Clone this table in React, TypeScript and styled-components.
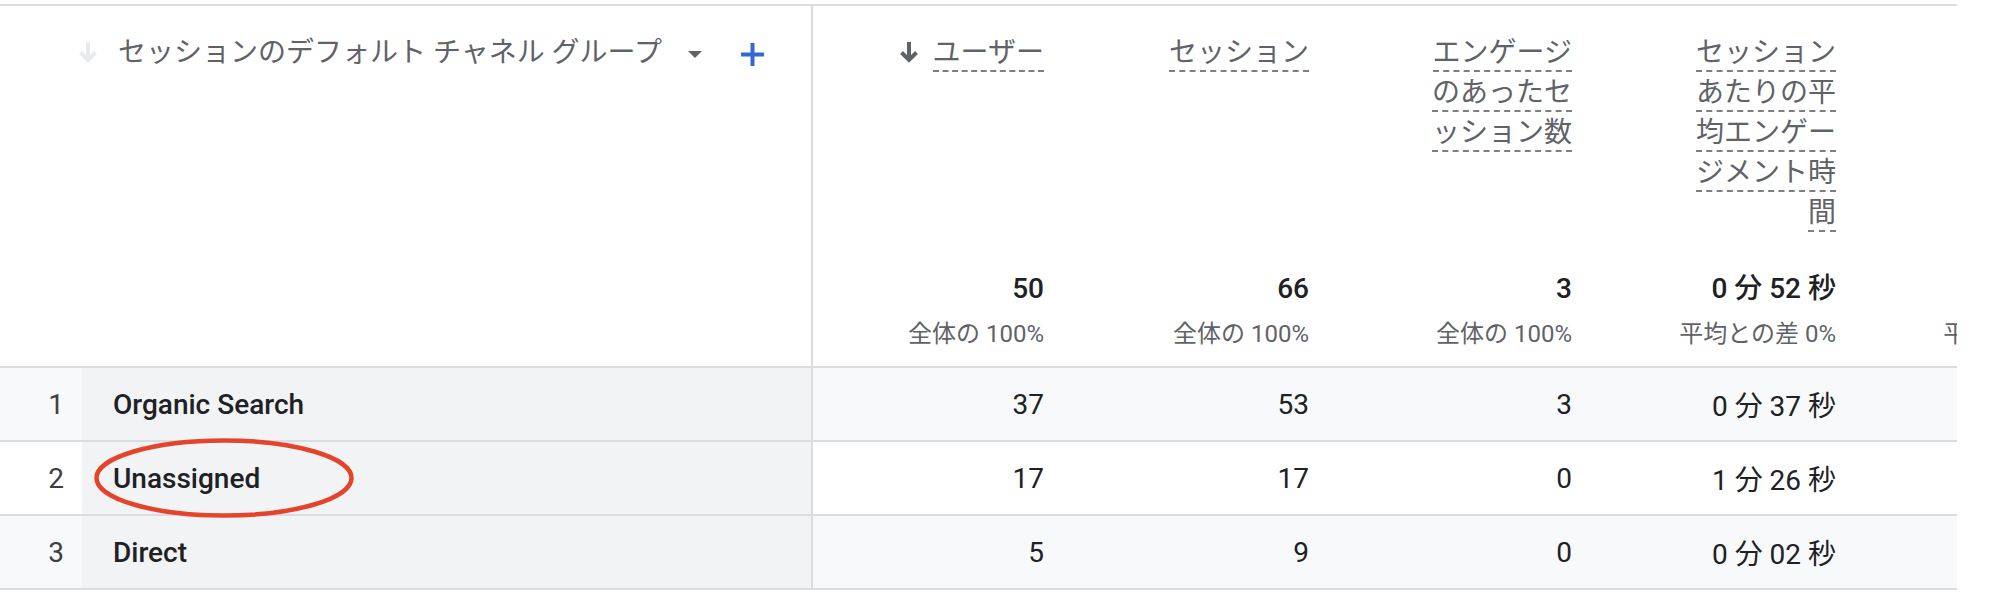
import React from "react";
import styled, { createGlobalStyle } from "styled-components";

const GlobalStyle = createGlobalStyle`
  html, body { margin: 0; padding: 0; background: #ffffff; }
  body {
    font-family: Roboto, "Noto Sans CJK JP", sans-serif;
    color: #202124;
    -webkit-font-smoothing: antialiased;
  }
`;

const Viewport = styled.div`
  position: relative;
  width: 1957px;
  margin-top: 4px;
  overflow: hidden;
`;

const Table = styled.div`
  display: grid;
  grid-template-columns: 82px 731px 247px 265px 263px 264px 264px;
  width: max-content;
  border-top: 2px solid #dadce0;
`;

const HeaderCellBase = styled.div`
  box-sizing: border-box;
  height: 362px;
  border-bottom: 2px solid #dadce0;
  background: #ffffff;
`;

const DimHeader = styled(HeaderCellBase)`
  grid-column: span 2;
  display: flex;
  align-items: flex-start;
  padding: 27px 0 0 78px;
  border-right: 2px solid #dadce0;
`;

const ArrowSvg = styled.svg<{ $faint?: boolean }>`
  flex: none;
  margin-top: 7px;
  color: ${(p) => (p.$faint ? "#e8eaed" : "#5f6368")};
`;

const DimLabel = styled.span`
  margin-left: 20px;
  font-size: 28px;
  line-height: 40px;
  color: #5f6368;
  white-space: nowrap;
`;

const Caret = styled.span`
  flex: none;
  margin: 18px 0 0 26px;
  width: 0;
  height: 0;
  border-left: 7.5px solid transparent;
  border-right: 7.5px solid transparent;
  border-top: 7px solid #5f6368;
`;

const AddIcon = styled.svg`
  flex: none;
  margin: 10px 0 0 39px;
  color: #3367d6;
`;

const MetricHeader = styled(HeaderCellBase)`
  display: flex;
  flex-direction: column;
  padding: 27px 16px 16px 0;
`;

const LabelRow = styled.div`
  display: flex;
  justify-content: flex-end;
  align-items: flex-start;
`;

const SortGap = styled.span`
  display: flex;
  margin-right: 14px;
`;

const Label = styled.div`
  max-width: 150px;
  font-size: 28px;
  line-height: 40px;
  color: #5f6368;
  text-align: right;
  line-break: anywhere;
`;

const Dashed = styled.span`
  padding-bottom: 1px;
  border-bottom: 2px dashed #7d7f83;
`;

const Totals = styled.div`
  margin-top: auto;
  display: flex;
  flex-direction: column;
  align-items: flex-end;
  white-space: nowrap;
`;

const TotalValue = styled.div`
  font-size: 28px;
  line-height: 36px;
  font-weight: 500;
  color: #202124;
`;

const TotalSub = styled.div`
  margin-top: 11px;
  font-size: 24px;
  line-height: 32px;
  color: #5f6368;
`;

const RowCell = styled.div<{ $striped?: boolean }>`
  box-sizing: border-box;
  height: 74px;
  display: flex;
  align-items: center;
  font-size: 28px;
  white-space: nowrap;
  border-bottom: 2px solid #dadce0;
  background: ${(p) => (p.$striped ? "#f8f9fa" : "#ffffff")};
`;

const IndexCell = styled(RowCell)`
  justify-content: flex-end;
  padding-right: 18px;
  color: #3c4043;
`;

const NameCell = styled(RowCell)`
  padding-left: 31px;
  font-weight: 500;
  color: #202124;
  background: #f1f3f4;
  border-right: 2px solid #dadce0;
`;

const ValueCell = styled(RowCell)`
  justify-content: flex-end;
  padding-right: 16px;
  color: #202124;
`;

const Annotation = styled.svg`
  position: absolute;
  left: 93px;
  top: 432px;
  pointer-events: none;
`;

const DownArrow: React.FC<{ faint?: boolean }> = ({ faint }) => (
  <ArrowSvg $faint={faint} width="20" height="24" viewBox="0 0 20 24">
    <path d="M10 2 V20" stroke="currentColor" strokeWidth="4" fill="none" />
    <path
      d="M2.5 12.5 L10 20 L17.5 12.5"
      stroke="currentColor"
      strokeWidth="4"
      fill="none"
      strokeLinejoin="miter"
    />
  </ArrowSvg>
);

type Metric = {
  label: string;
  total: string;
  sub: string;
  sorted?: boolean;
};

const metrics: Metric[] = [
  { label: "ユーザー", total: "50", sub: "全体の 100%", sorted: true },
  { label: "セッション", total: "66", sub: "全体の 100%" },
  { label: "エンゲージのあったセッション数", total: "3", sub: "全体の 100%" },
  {
    label: "セッションあたりの平均エンゲージメント時間",
    total: "0 分 52 秒",
    sub: "平均との差 0%",
  },
  {
    label: "ユーザーあたりのエンゲージのあったセッション数",
    total: "0.06",
    sub: "平均との差 0%",
  },
];

const rows = [
  { name: "Organic Search", values: ["37", "53", "3", "0 分 37 秒", "0.08"] },
  { name: "Unassigned", values: ["17", "17", "0", "1 分 26 秒", "0.00"] },
  { name: "Direct", values: ["5", "9", "0", "0 分 02 秒", "0.00"] },
];

export default function App() {
  return (
    <>
      <GlobalStyle />
      <Viewport>
        <Table>
          <DimHeader>
            <DownArrow faint />
            <DimLabel>セッションのデフォルト チャネル グループ</DimLabel>
            <Caret />
            <AddIcon width="23" height="23" viewBox="0 0 23 23">
              <path d="M11.5 0 V23 M0 11.5 H23" stroke="currentColor" strokeWidth="4" />
            </AddIcon>
          </DimHeader>
          {metrics.map((m) => (
            <MetricHeader key={m.label}>
              <LabelRow>
                {m.sorted && (
                  <SortGap>
                    <DownArrow />
                  </SortGap>
                )}
                <Label>
                  <Dashed>{m.label}</Dashed>
                </Label>
              </LabelRow>
              <Totals>
                <TotalValue>{m.total}</TotalValue>
                <TotalSub>{m.sub}</TotalSub>
              </Totals>
            </MetricHeader>
          ))}
          {rows.map((r, i) => {
            const striped = i % 2 === 0;
            return (
              <React.Fragment key={r.name}>
                <IndexCell $striped={striped}>{i + 1}</IndexCell>
                <NameCell>{r.name}</NameCell>
                {r.values.map((v, j) => (
                  <ValueCell key={j} $striped={striped}>
                    {v}
                  </ValueCell>
                ))}
              </React.Fragment>
            );
          })}
        </Table>
        <Annotation width="262" height="84" viewBox="0 0 262 84">
          <ellipse
            cx="131"
            cy="42"
            rx="127.5"
            ry="37.5"
            fill="none"
            stroke="#e5432b"
            strokeWidth="4.5"
          />
        </Annotation>
      </Viewport>
    </>
  );
}
